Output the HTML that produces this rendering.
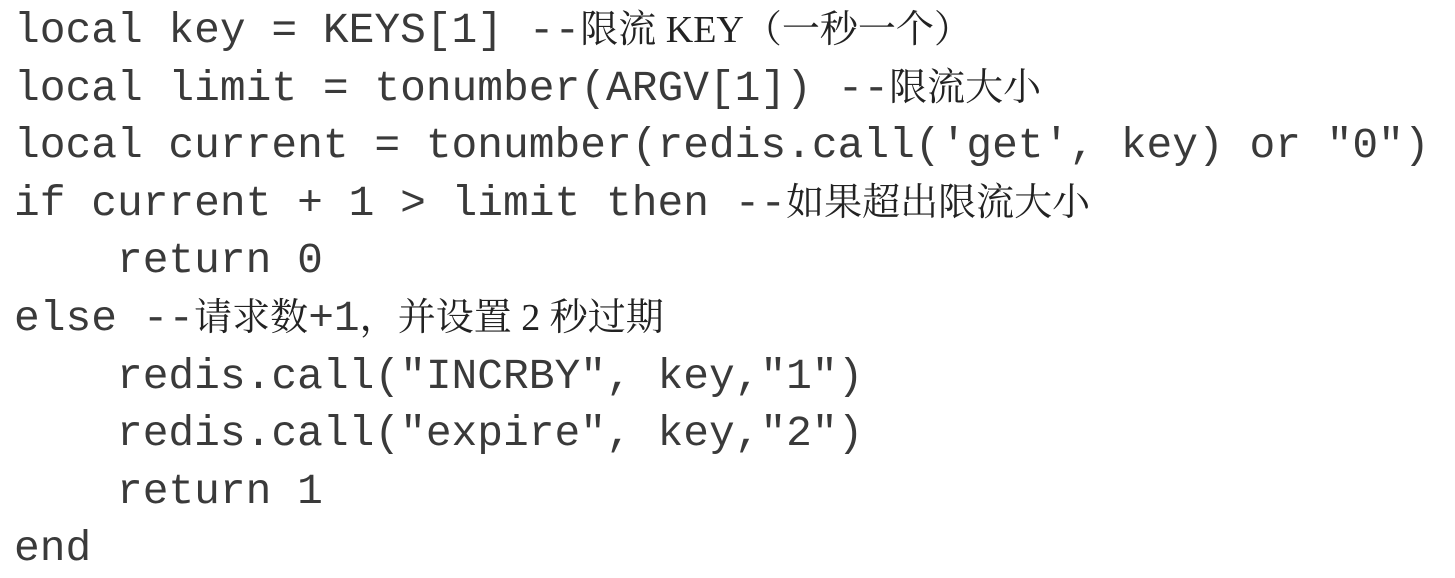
<!DOCTYPE html>
<html><head><meta charset="utf-8"><style>
html,body{margin:0;padding:0;background:#fff;}
body{width:1455px;height:575px;overflow:hidden;}
.w{padding:2px 0 0 14px;font-family:"Liberation Mono",monospace;font-size:42.9px;color:#3a3a3a;}
.w div{height:57.6px;line-height:57.6px;white-space:pre;overflow:visible;}
.c{font-family:"Liberation Serif","Noto Serif CJK SC",serif;font-size:38px;color:#222;line-height:1;}
.p{font-family:"Noto Serif CJK SC",serif;line-height:1;}
.m{font-family:"Liberation Mono",monospace;font-size:42.9px;color:#3a3a3a;line-height:1;}
</style></head><body>
<div class="w">
<div>local key = KEYS[1] --<span class="c">限流 KEY<span class="p">（</span>一秒一个<span class="p">）</span></span></div>
<div>local limit = tonumber(ARGV[1]) --<span class="c">限流大小</span></div>
<div>local current = tonumber(redis.call('get', key) or "0")</div>
<div>if current + 1 &gt; limit then --<span class="c">如果超出限流大小</span></div>
<div>    return 0</div>
<div>else --<span class="c">请求数<span class="m">+1</span><span class="p">，</span>并设置 2 秒过期</span></div>
<div>    redis.call("INCRBY", key,"1")</div>
<div>    redis.call("expire", key,"2")</div>
<div>    return 1</div>
<div>end</div>
</div>
</body></html>
